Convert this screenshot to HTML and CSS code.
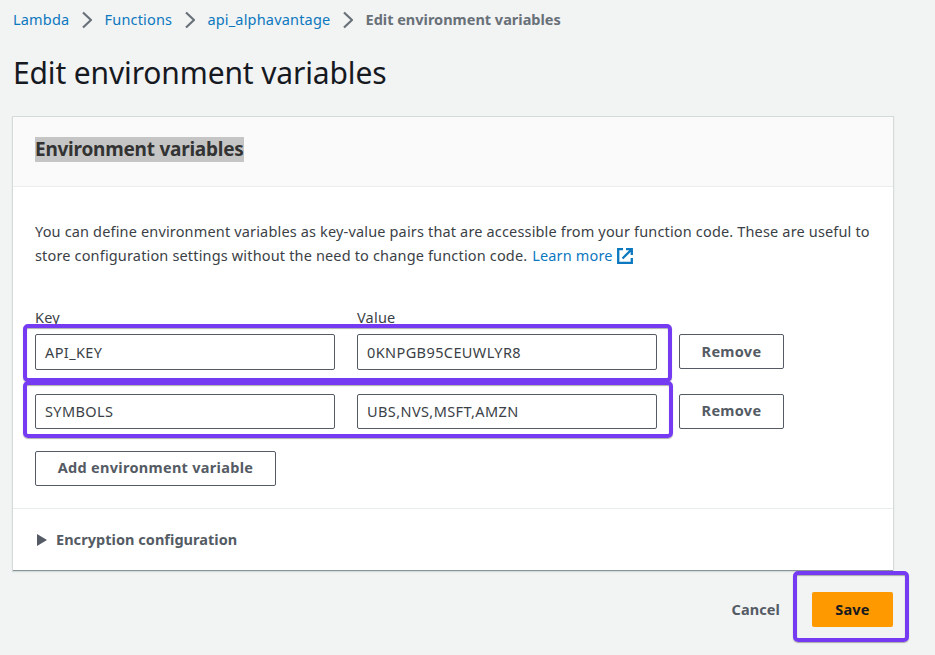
FILE: index.html
```
<!DOCTYPE html>
<html lang="en">
<head>
<meta charset="utf-8">
<title>Edit environment variables</title>
<link rel="stylesheet" href="styles.css">
</head>
<body>
<nav class="breadcrumbs">
  <a>Lambda</a>
  <svg class="chevron" viewBox="0 0 10 18"><path d="M1 1.5 9 9 1 16.5"/></svg>
  <a>Functions</a>
  <svg class="chevron" viewBox="0 0 10 18"><path d="M1 1.5 9 9 1 16.5"/></svg>
  <a>api_alphavantage</a>
  <svg class="chevron" viewBox="0 0 10 18"><path d="M1 1.5 9 9 1 16.5"/></svg>
  <span class="current">Edit environment variables</span>
</nav>
<h1>Edit environment variables</h1>
<main class="panel">
  <header class="panel-header"><h2>Environment variables</h2></header>
  <section class="panel-body">
    <p class="description">You can define environment variables as key-value pairs that are accessible from your function code. These are useful to<br>store configuration settings without the need to change function code. <a class="learn">Learn more</a><svg class="external" viewBox="0 0 16 16"><path d="M6 1.2H1.2v13.6h13.6V10M9 1.2h5.8V7M14.5 1.5 5.5 10.5"/></svg></p>
    <div class="variables">
      <span class="label">Key</span><span class="label">Value</span><span></span>
      <div class="field">API_KEY</div><div class="field">0KNPGB95CEUWLYR8</div><button class="button first">Remove</button>
      <div class="field second">SYMBOLS</div><div class="field second">UBS,NVS,MSFT,AMZN</div><button class="button second">Remove</button>
      <div class="highlight highlight-one"></div>
      <div class="highlight highlight-two"></div>
    </div>
    <button class="button add">Add environment variable</button>
  </section>
  <section class="encryption"><svg class="caret" viewBox="0 0 10 12"><path d="M0 0 10 6 0 12Z"/></svg><span>Encryption configuration</span></section>
</main>
<footer class="actions">
  <span class="cancel">Cancel</span>
  <div class="save-wrap"><button class="save">Save</button><div class="highlight highlight-save"></div></div>
</footer>
</body>
</html>
```
FILE: styles.css
```
* { box-sizing: border-box; }
body {
  margin: 0;
  padding: 0 42px 0 13px;
  height: 655px;
  overflow: hidden;
  background: #f2f3f3;
  color: #3b3f46;
  font: 14.5px/24px "Noto Sans", sans-serif;
}
a { color: #0b78bf; }
.breadcrumbs {
  display: flex;
  align-items: center;
  height: 40px;
  padding-bottom: 2px;
  letter-spacing: .18px;
  white-space: nowrap;
}
.chevron {
  width: 10px;
  height: 18px;
  margin: 2px 12.6px 0;
  fill: none;
  stroke: #687078;
  stroke-width: 2.2;
}
.current { color: #687078; font-weight: 700; letter-spacing: 0; }
h1 {
  margin: 13px 0 0;
  height: 64px;
  color: #16191f;
  font-size: 30px;
  font-weight: 400;
  line-height: 40px;
  letter-spacing: -.14px;
  white-space: nowrap;
}
.panel {
  height: 453px;
  background: #fff;
  box-shadow: 0 1px 0 #879596, 0 0 0 1px #d5dbdb, 0 1px 1px 1px #d5dbdb;
}
.panel-header {
  height: 70px;
  padding: 20px 22px;
  background: #fafafa;
  border-bottom: 1px solid #eaeded;
}
h2 {
  width: fit-content;
  margin: 0;
  background: #c5c5c5;
  color: #333;
  font-size: 19px;
  line-height: 25px;
  letter-spacing: -.24px;
  white-space: nowrap;
}
.panel-body {
  height: 322px;
  padding: 32px 22px 0;
  border-bottom: 1px solid #eaeded;
}
.description {
  margin: 0 0 38px;
  height: 48px;
  letter-spacing: .16px;
  white-space: nowrap;
}
.learn { margin-left: 1px; }
.external {
  width: 16px;
  height: 16px;
  margin-left: 4px;
  vertical-align: -3px;
  fill: none;
  stroke: #0b78bf;
  stroke-width: 2.3;
}
.variables {
  position: relative;
  display: grid;
  grid-template-columns: 300px 300px 105px;
  grid-template-rows: 29px 36px 59px;
  column-gap: 22px;
}
.label { letter-spacing: .2px; }
.field {
  height: 36px;
  padding: 0 9px;
  border: 1px solid #545b64;
  border-radius: 2px;
  background: #fff;
  line-height: 34px;
  letter-spacing: .4px;
  white-space: nowrap;
}
.button {
  height: 35px;
  padding: 0 0 2px;
  border: 1px solid #545b64;
  border-radius: 2px;
  background: #fff;
  color: #545b64;
  font: 700 14.5px/31px "Noto Sans", sans-serif;
  letter-spacing: .3px;
  white-space: nowrap;
}
.first { padding-bottom: 0; }
.second { margin-top: 24px; height: 35px; }
.field.second { line-height: 32px; }
.add { width: 241px; margin-top: 22px; }
.highlight {
  position: absolute;
  border: 4px solid #753bf2;
  border-radius: 5px;
  box-shadow: 0 1px 1px #77777799, inset 0 1px 1px #77777799;
}
.highlight-one { left: -12px; top: 19px; width: 649px; height: 58px; }
.highlight-two { left: -12px; top: 76px; width: 650px; height: 57px; }
.encryption {
  display: flex;
  align-items: center;
  gap: 9px;
  height: 62px;
  padding-left: 24px;
  color: #545b64;
  font-weight: 700;
  letter-spacing: .04px;
}
.encryption span { margin-top: -2px; }
.caret { width: 10px; height: 12px; fill: #545b64; }
.actions {
  display: flex;
  justify-content: flex-end;
  align-items: center;
  gap: 32px;
  height: 35px;
  margin-top: 22px;
  color: #545b64;
  font-weight: 700;
}
.cancel { margin-top: -2px; letter-spacing: .1px; }
.save-wrap { position: relative; height: 35px; }
.save {
  width: 81px;
  height: 35px;
  padding: 0;
  border: 0;
  border-radius: 2px;
  background: #ff9900;
  color: #16191f;
  font: 700 14.5px/35px "Noto Sans", sans-serif;
  letter-spacing: .2px;
}
.highlight-save { left: -19px; top: -21px; width: 116px; height: 71px; }
```
